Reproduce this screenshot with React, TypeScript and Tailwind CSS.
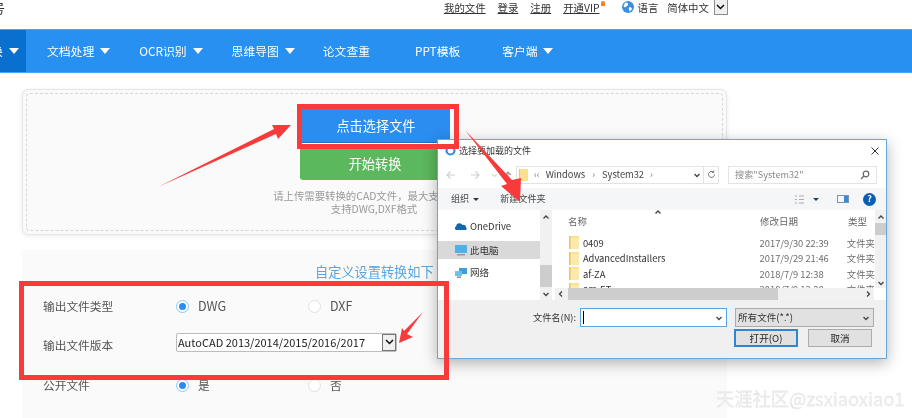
import React from "react";

function Tri({ className = "" }: { className?: string }) {
  return <span className={"inline-block w-0 h-0 border-l-[5.5px] border-r-[5.5px] border-t-[6px] border-l-transparent border-r-transparent border-t-white " + className} />;
}

function Radio({ on }: { on?: boolean }) {
  return (
    <span className={"w-[13px] h-[13px] rounded-full border flex items-center justify-center bg-white shrink-0 " + (on ? "border-[#8cc4f5]" : "border-[#e2e2e2]")}>
      {on && <span className="w-[7px] h-[7px] rounded-full bg-[#2a8df0]" />}
    </span>
  );
}

function Folder() {
  return (
    <svg width="10" height="13" viewBox="0 0 10 13" className="shrink-0">
      <rect x="0" y="0" width="10" height="13" fill="#fbe08f" />
      <rect x="0" y="0" width="1.5" height="13" fill="#e9c566" />
      <rect x="2" y="2" width="8" height="11" fill="#fde9ae" />
    </svg>
  );
}

function FileRow({ name, date }: { name: string; date: string }) {
  return (
    <div className="h-[15.5px] flex items-center text-[9.4px] text-[#333]">
      <span className="w-[14px] ml-[14px] flex"><Folder /></span>
      <span className="w-[178px] whitespace-nowrap">{name}</span>
      <span className="w-[88px] text-[#6d6d6d] whitespace-nowrap">{date}</span>
      <span className="text-[#6d6d6d] whitespace-nowrap">文件夹</span>
    </div>
  );
}

function Chevron({ dir }: { dir: "up" | "down" | "left" | "right" }) {
  const d = { up: "M1.5 5.5 4 3l2.5 2.5", down: "M1.5 3 4 5.5 6.5 3", left: "M5 1.5 2.5 4 5 6.5", right: "M3 1.5 5.5 4 3 6.5" }[dir];
  return (
    <svg width="8" height="8" viewBox="0 0 8 8" fill="none" stroke="#444" strokeWidth="1.3"><path d={d} /></svg>
  );
}

function Dialog() {
  return (
    <div className="absolute left-[437px] top-[139px] w-[450px] h-[220px] bg-white border border-[#6aa6d6] shadow-[0_4px_14px_rgba(0,0,0,0.3)] flex flex-col text-[#444]">
      <div className="h-[21px] flex items-center shrink-0 relative">
        <svg width="11" height="11" viewBox="0 0 11 11" className="ml-[7px]"><circle cx="5.5" cy="5.5" r="4" fill="none" stroke="#2e8ee0" strokeWidth="2.2" /></svg>
        <span className="ml-[3px] text-[9px] text-[#333]">选择要加载的文件</span>
        <svg width="10" height="10" viewBox="0 0 10 10" className="ml-auto mr-[6px] mt-[1px]" stroke="#333" fill="none" strokeWidth="1"><path d="M1.5 1.5l7 7M8.500 1.500l-7 7" /></svg>
      </div>
      <div className="h-[27px] flex items-center shrink-0">
        <svg width="70" height="12" viewBox="0 0 70 12" className="ml-[8px]" fill="none" stroke="#cfcfcf" strokeWidth="1.1">
          <path d="M9 6H1M4.500 2.500 1 6l3.500 3.500" />
          <path d="M25 6h8M29.500 2.500 33 6l-3.500 3.500" />
          <path d="M46 5l2.500 2.500L51 5" stroke="#d8d8d8" />
          <path d="M62 10V3M59 6l3-3 3 3" stroke="#999" />
        </svg>
        <div className="w-[188px] h-[18px] border border-[#e3e3e3] flex items-center text-[9.3px] relative">
          <span className="w-[9px] h-[12px] ml-[2px] bg-[#fbe08f] border-l border-[#e9c566]" />
          <span className="ml-[6px] text-[#777]">‹‹</span>
          <span className="ml-[6px] text-[#444]">Windows</span>
          <span className="ml-[7px] text-[#777]">›</span>
          <span className="ml-[7px] text-[#444]">System32</span>
          <span className="ml-[6px] text-[#777]">›</span>
          <span className="ml-auto mr-[2px] flex"><Chevron dir="down" /></span>
        </div>
        <div className="w-[15px] h-[18px] border-y border-r border-[#e3e3e3] flex items-center justify-center">
          <svg width="9" height="9" viewBox="0 0 9 9" fill="none" stroke="#777" strokeWidth="1"><path d="M7.500 4.500a3 3 0 1 1-1-2.300M6.800 0.500v2h-2" /></svg>
        </div>
        <div className="ml-[9px] w-[149px] h-[18px] border border-[#e3e3e3] flex items-center text-[9.2px] text-[#8a8a8a] pl-[6px]">
          <span>搜索"System32"</span>
          <svg width="10" height="10" viewBox="0 0 10 10" className="ml-auto mr-[6px]" fill="none" stroke="#666" strokeWidth="1.2"><circle cx="6" cy="4" r="2.800" /><path d="M4 6 1 9" /></svg>
        </div>
      </div>
      <div className="h-[22px] bg-[#f5f6f7] flex items-center shrink-0 text-[9.1px] text-[#444]">
        <span className="ml-[13px]">组织</span>
        <span className="ml-[4px] w-0 h-0 border-l-[3px] border-r-[3px] border-t-[3px] border-l-transparent border-r-transparent border-t-[#333]" />
        <span className="ml-[21px]">新建文件夹</span>
        <svg width="9" height="9" viewBox="0 0 9 9" className="ml-auto" stroke="#aaa" fill="none"><path d="M0 1h2M0 4.500h2M0 8h2M4 1h5M4 4.500h5M4 8h5" /></svg>
        <span className="ml-[9px] w-0 h-0 border-l-[3px] border-r-[3px] border-t-[3px] border-l-transparent border-r-transparent border-t-[#1a3f70]" />
        <span className="ml-[18px] w-[12px] h-[8px] border border-[#7c93ad] flex justify-end"><span className="w-[4px] bg-[#3a8ad8]" /></span>
        <span className="ml-[14px] mr-[10px] w-[13px] h-[13px] rounded-full bg-[#0a5fb4] text-white text-[9px] font-bold flex items-center justify-center">?</span>
      </div>
      <div className="h-[90px] flex shrink-0">
        <div className="w-[102px] text-[9.5px] text-[#333] relative">
          <div className="h-[31px] flex items-center pl-[17px] pt-[1px]">
            <svg width="12" height="7" viewBox="0 0 12 7" className="mr-[3px]"><path d="M1 7a2 2 0 0 1 0-3.500 3.500 3.500 0 0 1 6.500-1.500 2.500 2.500 0 0 1 3.500 2.500 1.500 1.500 0 0 1 0 2.500z" fill="#1266b0" /></svg>
            OneDrive
          </div>
          <div className="h-[18px] flex items-center pl-[17px] bg-[#d9d9d9]">
            <svg width="12" height="11" viewBox="0 0 12 11" className="mr-[3px]"><rect x="0" y="0" width="12" height="8" fill="#4fb0ea" /><rect x="2" y="9" width="8" height="1.500" fill="#999" /></svg>
            此电脑
          </div>
          <div className="h-[27px] flex items-center pl-[17px]">
            <svg width="12" height="11" viewBox="0 0 12 11" className="mr-[3px]"><rect x="4" y="1" width="8" height="6" fill="#3f9ddf" /><rect x="0" y="4" width="7" height="5" fill="#6cc0ee" /><rect x="2" y="9.500" width="4" height="1.500" fill="#8a8a8a" /></svg>
            网络
          </div>
        </div>
        <div className="w-[12px] bg-[#f1f1f1] flex flex-col items-center shrink-0">
          <span className="mt-[3px] flex"><Chevron dir="up" /></span>
          <div className="w-full h-[22px] bg-[#cdcdcd] mt-[44px]" />
          <span className="mt-[3px] flex"><Chevron dir="down" /></span>
        </div>
        <div className="w-[3px] shrink-0" />
        <div className="flex-1 flex flex-col min-w-0">
          <div className="flex-1 flex min-h-0">
            <div className="flex-1 min-w-0 overflow-hidden">
              <div className="h-[22px] flex items-center text-[9.5px] text-[#666]">
                <span className="ml-[13px] w-[192px] relative">
                  名称
                  <span className="absolute left-[86px] top-[-6px] flex"><Chevron dir="up" /></span>
                </span>
                <span className="w-[88px]">修改日期</span>
                <span>类型</span>
              </div>
              <div className="h-[3px]" />
              <FileRow name="0409" date="2017/9/30 22:39" />
              <FileRow name="AdvancedInstallers" date="2017/9/29 21:46" />
              <FileRow name="af-ZA" date="2018/7/9 12:38" />
              <FileRow name="am-ET" date="2018/7/9 12:38" />
            </div>
            <div className="w-[11px] bg-[#f1f1f1] flex flex-col items-center shrink-0">
              <span className="mt-[3px] flex"><Chevron dir="up" /></span>
              <div className="w-full h-[12px] bg-[#cdcdcd] mt-[2px]" />
              <span className="mt-auto mb-[1px] flex"><Chevron dir="down" /></span>
            </div>
          </div>
          <div className="h-[12px] flex items-center shrink-0 mr-[12px] bg-[#f1f1f1]">
            <span className="ml-[2px] flex"><Chevron dir="left" /></span>
            <div className="ml-[3px] w-[210px] h-full bg-[#cdcdcd]" />
            <span className="ml-auto mr-[2px] flex"><Chevron dir="right" /></span>
          </div>
        </div>
      </div>
      <div className="flex-1 bg-[#f0f0f0] flex flex-col relative">
        <div className="flex items-center mt-[8px] h-[19px]">
          <span className="ml-[95px] text-[9.2px] text-[#333] w-[46px] whitespace-nowrap">文件名(N):</span>
          <div className="ml-[1px] w-[147px] h-[19px] bg-white border border-[#5aa5e0] flex items-center pl-[2px]">
            <span className="w-px h-[13px] bg-black" />
            <span className="ml-auto mr-[3px] flex"><Chevron dir="down" /></span>
          </div>
          <div className="ml-[8px] w-[139px] h-[19px] bg-[#e1e1e1] border border-[#acacac] flex items-center pl-[2px] text-[9.6px] text-[#333]">
            所有文件(*.*)
            <span className="ml-auto mr-[3px] flex"><Chevron dir="down" /></span>
          </div>
        </div>
        <div className="flex mt-[2px] ml-[296px] text-[9.6px] text-[#222]">
          <div className="w-[64px] h-[18px] bg-[#e1e1e1] border-2 border-[#2f86d2] flex items-center justify-center">打开(O)</div>
          <div className="ml-[10px] w-[64px] h-[18px] bg-[#e1e1e1] border border-[#acacac] flex items-center justify-center">取消</div>
        </div>
      </div>
    </div>
  );
}

export default function App() {
  return (
    <div className="relative w-[912px] h-[418px] overflow-hidden bg-white font-['Noto_Sans_CJK_SC','Noto_Sans',sans-serif] blur-[0.3px]">
      <header className="h-[29px] flex items-start text-[#333] text-[10.4px] leading-[16px] relative">
        <span className="ml-[-8px] text-[13px]">号</span>
        <div className="ml-[439px] flex items-start">
          <a className="underline">我的文件</a>
          <a className="underline ml-[12px]">登录</a>
          <a className="underline ml-[12px]">注册</a>
          <a className="underline ml-[12px]">开通VIP</a>
          <span className="w-[4px] h-[5px] rounded-t-full bg-[#f0822a] ml-[1px] mt-[1px]" />
          <svg width="12" height="12" viewBox="0 0 12 12" className="ml-[17px] mt-[1px]"><circle cx="6" cy="6" r="6" fill="#3b8fe0" /><path d="M3 2c2-1 3 0 3 1.500S4 5 3.500 6 2 6 1.500 5zM7 6.500c1.500-.5 3 0 2.800 1.500S8 10.500 7.500 10 6.500 7 7 6.500z" fill="#fff" /></svg>
          <span className="ml-[4px]">语言</span>
          <span className="ml-[9px]">简体中文</span>
          <span className="ml-[5px] w-[14px] h-[15px] border border-[#8d8d8d] border-t-0 flex items-center justify-center bg-[#f0f0f0]">
            <svg width="9" height="6" viewBox="0 0 9 6" fill="none" stroke="#111" strokeWidth="1.500"><path d="M1 1l3.500 3.500L8 1" /></svg>
          </span>
        </div>
      </header>
      <nav className="h-[44px] bg-[#2890f0] border-y border-[#4ba3f5] flex items-center text-white text-[11.8px] whitespace-nowrap">
        <div className="w-[26px] h-full bg-[#0a70d0] flex items-center pr-[7px] overflow-hidden shrink-0">
          <span className="ml-[-9px]">换</span>
          <Tri className="ml-[6px]" />
        </div>
        <span className="ml-[21px]">文档处理</span><Tri className="ml-[6px]" />
        <span className="ml-[29px]">OCR识别</span><Tri className="ml-[6px]" />
        <span className="ml-[29px]">思维导图</span><Tri className="ml-[6px]" />
        <span className="ml-[28px]">论文查重</span>
        <span className="ml-[45px]">PPT模板</span>
        <span className="ml-[42px]">客户端</span><Tri className="ml-[5px]" />
      </nav>
      <main className="ml-[22px] w-[705px]">
        <section className="mt-[16px] h-[146px] rounded-[6px] border border-[#e6e6e6] bg-[#fafafa] p-[3px] shadow-[0_1px_4px_rgba(0,0,0,0.08)]">
          <div className="h-full rounded-[4px] border border-dashed border-[#d6d6d6] flex flex-col items-start">
            <button className="mt-[15px] ml-[275px] w-[148px] h-[34px] bg-[#2a8def] text-white text-[13.2px] flex items-center justify-center shrink-0 border-b border-[#1b74c8]">点击选择文件</button>
            <button className="mt-[5px] ml-[273px] w-[150px] h-[32px] bg-[#5cb85c] text-white text-[13.2px] flex items-center justify-center rounded-b-[3px] shrink-0">开始转换</button>
            <p className="mt-[9px] ml-[137px] w-[420px] text-center text-[10.4px] leading-[13px] text-[#999]">请上传需要转换的CAD文件，最大支持100M<br /><span className="block">支持DWG,DXF格式</span></p>
          </div>
        </section>
        <section className="mt-[15px] h-[168px] bg-[#fafafa] flex flex-col text-[11.7px] text-[#555]">
          <h2 className="mt-[13px] ml-[293px] text-[13.2px] leading-[18px] text-[#5aa5dd] whitespace-nowrap">自定义设置转换如下</h2>
          <div className="mt-[17px] flex items-center h-[16px]">
            <span className="ml-[21px] w-[133px]">输出文件类型</span>
            <Radio on /><span className="ml-[9px] w-[110px] text-[12.500px]">DWG</span>
            <Radio /><span className="ml-[9px] text-[12.500px]">DXF</span>
          </div>
          <div className="mt-[18px] flex items-center h-[20px]">
            <span className="ml-[21px] w-[133px] mt-[5px]">输出文件版本</span>
            <div className="w-[221px] h-[19px] bg-white border border-[#bdbdbd] rounded-[2px] flex items-center pl-[1px] text-[11px] text-[#222] whitespace-nowrap">
              AutoCAD 2013/2014/2015/2016/2017
              <span className="ml-auto w-[14px] h-full border border-[#777] bg-[#f0f0f0] flex items-center justify-center">
                <svg width="9" height="6" viewBox="0 0 9 6" fill="none" stroke="#111" strokeWidth="1.500"><path d="M1 1l3.500 3.500L8 1" /></svg>
              </span>
            </div>
          </div>
          <div className="mt-[25px] flex items-center h-[16px]">
            <span className="ml-[21px] w-[133px]">公开文件</span>
            <Radio on /><span className="ml-[9px] w-[110px]">是</span>
            <Radio /><span className="ml-[9px]">否</span>
          </div>
        </section>
      </main>
      <Dialog />
      <div className="absolute left-[297px] top-[104px] w-[162px] h-[45px] border-[5px] border-[#f93a3a]" />
      <div className="absolute left-[19px] top-[281px] w-[430px] h-[99px] border-[5px] border-[#f93a3a]" />
      <svg className="absolute left-0 top-0 w-[912px] h-[418px]" viewBox="0 0 912 418" fill="#f93a3a">
        <polygon points="158,187 274,129 272,125 291,125 278,139 276,134" />
        <polygon points="465,130 512,180 521,178 520,202 501,186 507,184" />
        <polygon points="423,312 404,331 402,328 399,343 413,337 407,334" />
      </svg>
      <span className="absolute left-[716px] top-[386px] text-[18.3px] leading-[24px] text-[#f0f0f0] whitespace-nowrap [-webkit-text-stroke:0.3px_#dcdcdc]">天涯社区@zsxiaoxiao1</span>
    </div>
  );
}
